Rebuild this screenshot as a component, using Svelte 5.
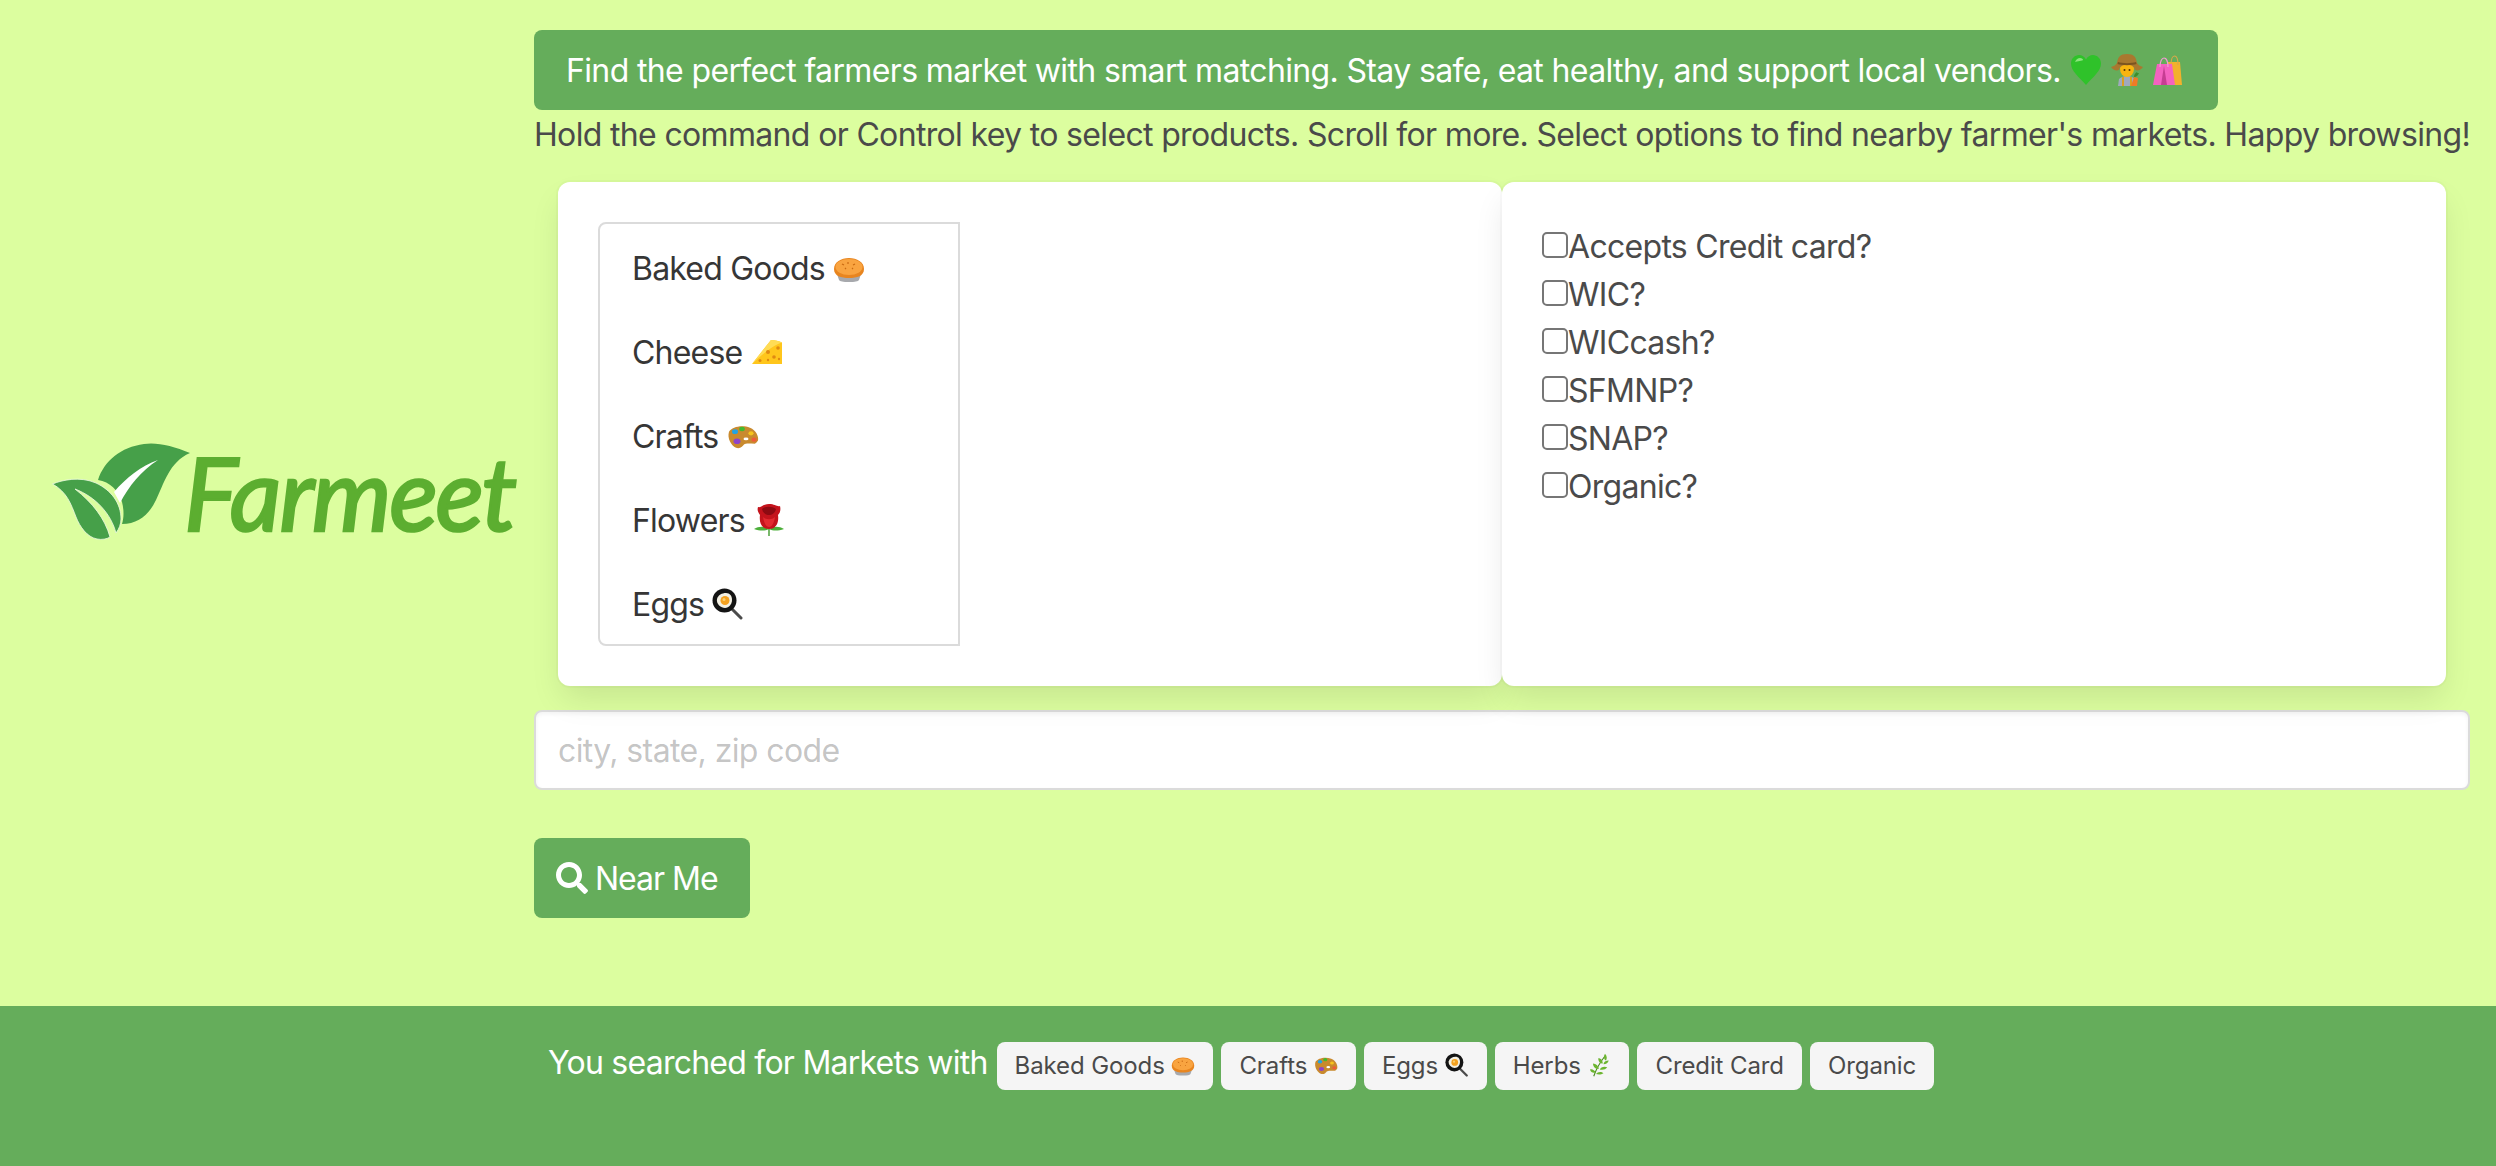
<script>
  const products = ['pie', 'cheese', 'palette', 'rose', 'egg'];
  const names = { pie: 'Baked Goods', cheese: 'Cheese', palette: 'Crafts', rose: 'Flowers', egg: 'Eggs' };
  const checks = ['Accepts Credit card?', 'WIC?', 'WICcash?', 'SFMNP?', 'SNAP?', 'Organic?'];
</script>

{#snippet emoji(kind)}
  <svg class="emoji" viewBox="0 0 32 32" aria-hidden="true">
    {#if kind === 'heart'}
      <path d="M16 31C9 23 1 17 1 9.500 1 4.500 5 1 9 1c3 0 5.500 1.500 7 4.500C17.500 2.500 20 1 23 1c4 0 8 3.500 8 8.500C31 17 23 23 16 31z" fill="#2fc22a"/>
      <path d="M5 8c1-2.500 3-4 5-4s3 1 3 2-6 1-8 2z" fill="#8be37d"/>
    {:else if kind === 'farmer'}
      <path d="M7 32l1-7c2-2 5-3 8-3s6 1 8 3l1 7z" fill="#9fa9bd"/>
      <path d="M11 23h2v9h-2zM19 23h2v9h-2z" fill="#d9a021"/>
      <ellipse cx="16" cy="15" rx="7" ry="8" fill="#f9b40f"/>
      <path d="M0 13c3-1 5-2 6-4 1-6 3-9 10-9s9 3 10 9c1 2 3 3 6 4-2 3-5 4-8 3-1-3-2-5-8-5s-7 2-8 5c-3 1-6 0-8-3z" fill="#a9782f"/>
      <path d="M7 8c4 1.500 14 1.500 18 0l.5 2c-4 1.500-15 1.500-19 0z" fill="#7c5420"/>
      <circle cx="13.500" cy="16" r="1" fill="#553403"/><circle cx="18.500" cy="16" r="1" fill="#553403"/>
      <path d="M20 32l3-9 4 1-1 8z" fill="#ef7b26"/>
      <path d="M23 23c0-2 1-4 3-5 0 1 1 1 2 1-1 2-2 4-5 4z" fill="#3d8e2c"/>
    {:else if kind === 'bags'}
      <path d="M16 8h12l2 23H17z" fill="#f3b12c"/>
      <path d="M19 11c0-12 7-12 7 0" fill="none" stroke="#d9a84a" stroke-width="1.200"/>
      <path d="M5 10h15l3 21H1z" fill="#f462c0"/>
      <path d="M12 12l-3 19h6z" fill="#c63d92"/>
      <path d="M8 13C8 1 16 1 16 13" fill="none" stroke="#f39bd5" stroke-width="1.200"/>
    {:else if kind === 'pie'}
      <g transform="translate(0 1)">
        <path d="M3 18h26l-3 9c-1 1.500-4 2-10 2s-9-.500-10-2z" fill="#a7a9ad"/>
        <path d="M1 16c0-7 7-11 15-11s15 4 15 11-7 9-15 9-15-2-15-9z" fill="#e8851f"/>
        <ellipse cx="16" cy="14" rx="13.500" ry="8" fill="#f9a440"/>
        <path d="M9 11l2 1M15 9v2M22 11l-2 1M12 15l1 1M20 15l-1 1" stroke="#c96a12" stroke-width="1.200"/>
      </g>
    {:else if kind === 'cheese'}
      <path d="M1 28L20 4c4 0 8 1 11 2.500V28z" fill="#ffc61c"/>
      <path d="M1 28L20 4c4 0 8 1 11 2.500-8 2-20 12-30 21.500z" fill="#ffdc55"/>
      <circle cx="17" cy="16" r="2" fill="#e08a12"/><circle cx="27" cy="12" r="1.800" fill="#e08a12"/>
      <circle cx="23" cy="21" r="1.800" fill="#e08a12"/><circle cx="9" cy="24.500" r="1.500" fill="#e08a12"/>
      <circle cx="17" cy="24" r="1.200" fill="#e08a12"/><circle cx="28" cy="23" r="1.200" fill="#e08a12"/>
    {:else if kind === 'palette'}
      <g transform="translate(0 4.500) scale(1 .8)">
        <path d="M2 9c3-6 13-9 21-5 6 3 9 11 8 16-1 2-2 3-3 4-5 0-9-1-11 1-1 2-4 6-8 4C4 26 0 17 2 9z" fill="#c98a2e"/>
        <circle cx="8" cy="9" r="3" fill="#22a3e3"/><circle cx="15" cy="5.500" r="2.800" fill="#43b92f"/>
        <circle cx="24" cy="11" r="2.600" fill="#f5c41d"/><circle cx="27" cy="19" r="2.600" fill="#ef5b3a"/>
        <circle cx="10" cy="21" r="3.500" fill="#8e44c9"/><ellipse cx="19" cy="18" rx="2.500" ry="1.800" fill="#fff"/>
      </g>
    {:else if kind === 'rose'}
      <path d="M15.300 20h1.400v12h-1.400z" fill="#3f9a2c"/>
      <path d="M1 25c5-3 10-3 15 0 5-3 10-3 15 0-6 2-11 2-15 0-4 2-9 2-15 0z" fill="#4caf3a"/>
      <path d="M5 3c3 1 5-3 11-3s8 3 11 2c1 4 0 7-2 9 1 6-1 14-9 14S6 18 7 11C5 8 4 6 5 3z" fill="#c4131c"/>
      <path d="M9 5c3-3 10-3 14 0-1 4-4 6-7 6s-6-2-7-6z" fill="#8d0a12"/>
      <path d="M10 13c3 3 9 3 12 0-1 6-3 10-6 10s-5-4-6-10z" fill="#e32a30"/>
    {:else if kind === 'egg'}
      <path d="M20 21l9 9" stroke="#4b4b4b" stroke-width="3" stroke-linecap="round"/>
      <circle cx="12.500" cy="12.500" r="12" fill="#141414"/>
      <path d="M5 11c1-4 5-6 9-6s6 3 6 7-3 8-7 8-9-4-8-9z" fill="#f4f1e4"/>
      <circle cx="13" cy="12.500" r="4.500" fill="#f6a21f"/><circle cx="12" cy="11.500" r="1.500" fill="#fcd06f"/>
    {:else if kind === 'herb'}
      <path d="M9 31C12 22 17 13 24 4" fill="none" stroke="#4a8c22" stroke-width="1.500"/>
      <path d="M24 1c3 3 3 7 1 9-3-2-3-6-1-9zM15 7c4 0 6 3 6 7-4 0-6-3-6-7zM29 10c-1 3-3 5-7 5 0-3 3-5 7-5zM8 14c4 0 7 3 8 7-5 1-8-3-8-7zM27 19c-2 3-6 4-10 3 1-3 6-5 10-3zM4 22c3-1 6 1 8 4-4 1-7 0-8-4zM22 27c-3 2-7 2-10 1 2-3 7-4 10-1z" fill="#6cb52f"/>
    {/if}
  </svg>
{/snippet}

<div class="page">
  <main class="main">
    <div class="brand">
      <svg class="leaves" viewBox="0 0 140 100" aria-hidden="true">
        <path d="M139 11C122 4 106 0 93 2 70 5 53 19 47 38c12 2 20 10 24 22 2 8 2 15 0 22 16 0 27-9 34-24 8-16 13-38 34-47z" fill="#46a049"/>
        <path d="M107 18C90 24 75 36 63 50l6 11C78 44 90 29 107 18z" fill="#fff"/>
        <path d="M1.500 42C11 38 29 34 45 41c15 7 25 20 25 36 0 5-2 10-5 14C60 72 45 55 24 47c18 14 30 30 35 48-3 2-8 3-13 2C36 95 29 85 25 75 20 62 16 50 1.500 42z" fill="#46a049" stroke="#eef9e4" stroke-width=".8"/>
      </svg>
      <span class="wordmark">Farmeet</span>
    </div>

    <div class="content">
      <div class="notice">Find the perfect farmers market with smart matching. Stay safe, eat healthy, and support local vendors. {@render emoji('heart')} {@render emoji('farmer')} {@render emoji('bags')}</div>
      <p class="hint">Hold the command or Control key to select products. Scroll for more. Select options to find nearby farmer's markets. Happy browsing!</p>

      <div class="cards">
        <section class="card">
          <ul class="products">
            {#each products as p}
              <li>{names[p]} {@render emoji(p)}</li>
            {/each}
          </ul>
        </section>
        <section class="card">
          {#each checks as c}
            <label class="check"><input type="checkbox" />{c}</label>
          {/each}
        </section>
      </div>

      <input class="location" type="text" placeholder="city, state, zip code" />

      <button class="near" type="button">
        <svg class="search" viewBox="0 0 512 512" aria-hidden="true"><path fill="currentColor" d="M505 442.700L405.300 343c-4.500-4.500-10.600-7-17-7H372c27.600-35.300 44-79.700 44-128C416 93.100 322.900 0 208 0S0 93.100 0 208s93.100 208 208 208c48.300 0 92.700-16.400 128-44v16.300c0 6.400 2.500 12.500 7 17l99.700 99.700c9.400 9.400 24.600 9.400 33.900 0l28.300-28.300c9.400-9.400 9.400-24.600.1-34zM208 336c-70.700 0-128-57.200-128-128 0-70.700 57.200-128 128-128 70.700 0 128 57.200 128 128 0 70.700-57.200 128-128 128z"/></svg>
        Near Me
      </button>
    </div>
  </main>

  <footer class="footer">
    <span class="searched">You searched for Markets with</span>
    <span class="tag">Baked Goods {@render emoji('pie')}</span>
    <span class="tag">Crafts {@render emoji('palette')}</span>
    <span class="tag">Eggs {@render emoji('egg')}</span>
    <span class="tag">Herbs {@render emoji('herb')}</span>
    <span class="tag">Credit Card</span>
    <span class="tag">Organic</span>
  </footer>
</div>

<style>
  :global(body) {
    margin: 0;
    background: #dcfe9f;
    font-family: Inter, "Liberation Sans", sans-serif;
    color: #4a4a4a;
    overflow-x: hidden;
  }
  .page {
    display: flex;
    flex-direction: column;
    min-height: 1166px;
    font-size: 32px;
    letter-spacing: -0.64px;
  }
  .main {
    display: flex;
    height: 1006px;
    box-sizing: border-box;
  }
  .brand {
    width: 534px;
    height: 984px;
    display: flex;
    align-items: center;
    flex-shrink: 0;
    padding-left: 51px;
    box-sizing: border-box;
  }
  .leaves {
    width: 140px;
    height: 100px;
    flex-shrink: 0;
  }
  .wordmark {
    margin-left: -7px;
    font-family: Lato, sans-serif;
    font-style: italic;
    font-weight: 400;
    font-size: 101px;
    letter-spacing: -2px;
    line-height: 1;
    color: #5cae30;
    -webkit-text-stroke: 2.500px #5cae30;
  }
  .content {
    width: 1936px;
    padding-top: 30px;
    flex-shrink: 0;
  }
  .notice {
    display: inline-flex;
    align-items: center;
    gap: 9px;
    height: 80px;
    padding: 0 34px 0 32px;
    box-sizing: border-box;
    background: #65ad5b;
    color: #fff;
    border-radius: 8px;
    white-space: nowrap;
    vertical-align: top;
  }
  .hint {
    margin: 0 0 24px;
    padding-top: 2px;
    height: 46px;
    line-height: 46px;
    letter-spacing: -0.66px;
    white-space: nowrap;
  }
  .cards {
    display: flex;
    margin: 0 24px 24px;
  }
  .card {
    flex: 1;
    height: 504px;
    padding: 40px;
    box-sizing: border-box;
    background: #fff;
    border-radius: 12px;
    box-shadow: 0 16px 32px -4px rgba(10, 10, 10, 0.1), 0 0 0 2px rgba(10, 10, 10, 0.02);
  }
  .products {
    list-style: none;
    margin: 0;
    padding: 0;
    width: 362px;
    height: 424px;
    box-sizing: border-box;
    border: 2px solid #dbdbdb;
    border-radius: 8px 0 0 8px;
    color: #363636;
  }
  .products li {
    height: 84px;
    box-sizing: border-box;
    padding: 6px 0 0 32px;
    line-height: 78px;
    letter-spacing: -0.8px;
  }
  .emoji {
    width: 1em;
    height: 1em;
    vertical-align: -0.125em;
    flex-shrink: 0;
  }
  .check {
    display: flex;
    height: 48px;
    box-sizing: border-box;
    padding-top: 2px;
    line-height: 46px;
    letter-spacing: -0.7px;
  }
  .check input {
    appearance: none;
    width: 26px;
    height: 26px;
    margin: 8px 0 0 0;
    background: #fff;
    border: 2px solid #767676;
    border-radius: 5px;
    box-sizing: border-box;
    flex-shrink: 0;
  }
  .location {
    display: block;
    width: 100%;
    height: 80px;
    padding: 0 22px;
    box-sizing: border-box;
    background: #fff;
    border: 2px solid #dbdbdb;
    border-radius: 8px;
    box-shadow: inset 0 2px 4px rgba(10, 10, 10, 0.05);
    font: inherit;
    letter-spacing: -0.6px;
    color: #363636;
    margin-bottom: 48px;
    outline: none;
  }
  .location::placeholder {
    color: rgba(54, 54, 54, 0.3);
  }
  .near {
    display: flex;
    align-items: center;
    gap: 7px;
    width: 216px;
    height: 80px;
    padding: 0 0 0 22px;
    box-sizing: border-box;
    background: #65ad5b;
    color: #fff;
    border: none;
    border-radius: 8px;
    font: inherit;
    letter-spacing: -1px;
  }
  .search {
    width: 32px;
    height: 32px;
  }
  .footer {
    flex: 1;
    display: flex;
    align-items: flex-start;
    gap: 8px;
    padding: 36px 0 0 548px;
    box-sizing: border-box;
    background: #65ad5b;
  }
  .searched {
    color: #fff;
    line-height: 48px;
    margin-right: 1px;
    white-space: nowrap;
    margin-top: -3px;
    letter-spacing: -0.76px;
  }
  .tag {
    height: 48px;
    line-height: 48px;
    padding: 0 18px;
    background: #f5f5f5;
    color: #4a4a4a;
    border-radius: 8px;
    font-size: 24px;
    letter-spacing: -0.1px;
    white-space: nowrap;
  }
</style>
